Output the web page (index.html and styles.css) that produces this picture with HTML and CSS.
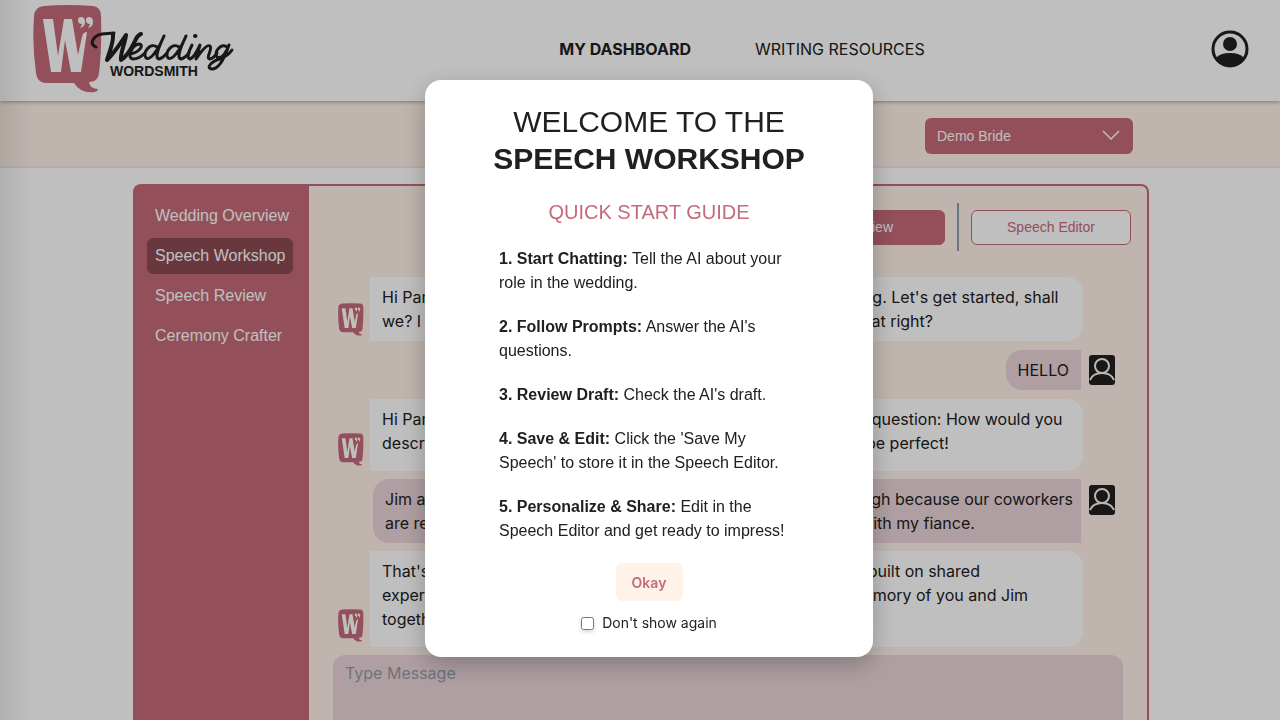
FILE: index.html
```
<!DOCTYPE html>
<html lang="en">
<head>
<meta charset="utf-8">
<title>Wedding Wordsmith</title>
<link rel="stylesheet" href="styles.css">
</head>
<body>
<svg class="defs" aria-hidden="true">
  <symbol id="mark" viewBox="0 0 70 88">
    <path fill="#c56b79" d="M11 1Q34-1 60 1Q68 2 68 11Q69 44 66 68Q65 77 56 77Q57 84 65 84Q65 86 62 87Q48 89 41 78L12 78Q4 77 3 68Q-1 40 1 12Q1 2 11 1Z"/>
    <path fill="#fff" d="M10 14H20L25 51L31 14H39L45 50L49 32Q50 27 54 27L48 67H38L32 35L28 67H18Z"/>
    <path fill="#fff" d="M48 12q4 0 4 5q0 5-5 6q2-3 2-4q-4 0-4-4q0-3 3-3zM56 12q4 0 4 5q0 5-5 6q2-3 2-4q-4 0-4-4q0-3 3-3z"/>
  </symbol>
  <symbol id="person" viewBox="0 0 26 30">
    <rect width="26" height="30" rx="3" fill="#202020"/>
    <circle cx="13" cy="11" r="7" fill="none" stroke="#fff1e9" stroke-width="2"/>
    <path d="M1 25Q4 18 13 18T25 25" fill="none" stroke="#fff1e9" stroke-width="2"/>
  </symbol>
</svg>
<header class="header">
  <a class="logo" href="#" aria-label="Wedding Wordsmith">
    <svg width="204" height="90" viewBox="0 0 204 90">
      <use href="#mark" x="0" y="1" width="70" height="88"/>
      <g fill="none" stroke="#202020" stroke-linecap="round" stroke-linejoin="round" stroke-width="3">
        <path d="M63 43C56 41 59 32 69 30L81 29"/>
        <path stroke-width="4" d="M80 30C81 38 76 49 74 56C82 48 89 37 93 31C92 40 87 49 88 56C95 52 100 41 103 35Q105 31 108 30"/>
        <path d="M97 50C108 48 111 40 106 40C99 41 93 54 100 55Q106 55 112 49"/>
        <path d="M124 43C118 38 109 48 113 54C118 57 126 44 131 32C126 43 121 54 126 55Q130 54 134 49"/>
        <path d="M146 43C140 38 131 48 135 54C140 57 148 44 153 32C148 43 143 54 148 55Q152 54 156 49"/>
        <path d="M159 41C156 47 153 54 157 55Q161 54 167 41L163 55C169 46 174 40 177 42C180 45 172 54 177 55Q181 54 184 49"/>
        <path d="M194 43C189 38 180 48 184 53C189 56 194 47 196 41C192 53 186 65 179 65C172 64 179 57 187 55Q195 52 199 46"/>
        <path stroke-width="4" d="M162 32h.5"/>
      </g>
      <text class="logo-word" x="77" y="72">WORDSMITH</text>
    </svg>
  </a>
  <nav class="nav">
    <a class="current" href="#">MY DASHBOARD</a>
    <a href="#">WRITING RESOURCES</a>
  </nav>
  <button class="account" aria-label="Account">
    <svg width="38" height="38" viewBox="0 0 38 38"><circle cx="19" cy="19" r="17" fill="none" stroke="#202020" stroke-width="3"/><circle cx="19" cy="14" r="7" fill="#202020"/><path d="M5 28Q9 23 19 23T33 28Q27 36 19 36T5 28Z" fill="#202020"/></svg>
  </button>
</header>
<div class="band">
  <div class="band-inner">
    <select class="picker" aria-label="Event"><option>Demo Bride</option></select>
    <svg class="chevron" width="18" height="10" viewBox="0 0 18 10"><path d="M1 1L9 9L17 1" fill="none" stroke="#fff" stroke-width="1.5"/></svg>
  </div>
</div>
<div class="page">
<main class="workspace">
  <aside class="sidebar">
    <a href="#">Wedding Overview</a>
    <a class="active" href="#">Speech Workshop</a>
    <a href="#">Speech Review</a>
    <a href="#">Ceremony Crafter</a>
  </aside>
  <section class="chat">
    <div class="tabs">
      <button class="tab tab-on">Interview</button>
      <span class="divider"></span>
      <button class="tab">Speech Editor</button>
    </div>
    <div class="messages">
      <div class="row bot"><svg class="bot-icon"><use href="#mark"/></svg>
        <p class="bubble">Hi Pam! I'm here to help you write a lovely speech for the wedding. Let's get started, shall<br>we? I understand that you're giving a speech for the couple, is that right?</p></div>
      <div class="row user"><p class="bubble">HELLO</p><svg class="user-icon"><use href="#person"/></svg></div>
      <div class="row bot"><svg class="bot-icon"><use href="#mark"/></svg>
        <p class="bubble tall">Hi Pam! It is wonderful to meet you. Let's start with the very first question: How would you<br>describe your relationship? Just a few short lines or a list would be perfect!</p></div>
      <div class="row user"><p class="bubble wide">Jim and I met at work and soon became close friends, it was tough because our coworkers<br>are really close, and now I am happy to be planning a wedding with my fiance.</p><svg class="user-icon"><use href="#person"/></svg></div>
      <div class="row bot"><svg class="bot-icon"><use href="#mark"/></svg>
        <p class="bubble tall">That's such a lovely story, and a wonderful, healthy relationship built on shared<br>experiences. Could you please tell me more about a favourite memory of you and Jim<br>together?</p></div>
    </div>
    <textarea class="composer" aria-label="Message" placeholder="Type Message"></textarea>
  </section>
</main>
</div>
<div class="overlay">
  <div class="modal" role="dialog" aria-modal="true" aria-labelledby="welcome">
    <h1 id="welcome">WELCOME TO THE<br><strong>SPEECH WORKSHOP</strong></h1>
    <h2>QUICK START GUIDE</h2>
    <div class="steps">
      <p><strong>1. Start Chatting:</strong> Tell the AI about your role in the wedding.</p>
      <p><strong>2. Follow Prompts:</strong> Answer the AI's questions.</p>
      <p><strong>3. Review Draft:</strong> Check the AI's draft.</p>
      <p><strong>4. Save &amp; Edit:</strong> Click the 'Save My Speech' to store it in the Speech Editor.</p>
      <p><strong>5. Personalize &amp; Share:</strong> Edit in the Speech Editor and get ready to impress!</p>
    </div>
    <button class="okay">Okay</button>
    <label class="again"><input type="checkbox"> Don't show again</label>
  </div>
</div>
</body>
</html>
```
FILE: styles.css
```
* { box-sizing: border-box; }
body { margin: 0; height: 100vh; overflow: hidden; display: flex; flex-direction: column; background: #fff; color: #202020; font: 16px/24px Inter, sans-serif; }
a { color: inherit; text-decoration: none; }
button, select, textarea { font: inherit; }
p, h1, h2 { margin: 0; }
.defs { position: absolute; width: 0; height: 0; }
.header { position: relative; flex: none; height: 101px; padding: 0 31px 4px 33px; display: flex; justify-content: space-between; align-items: center; box-shadow: 0 1px 4px rgba(0,0,0,.35); }
.logo { display: flex; width: 240px; }
.logo-word { font: bold 14px "Liberation Sans", sans-serif; fill: #202020; }
.nav { display: flex; gap: 64px; }
.current { font-weight: 700; }
.account { display: flex; padding: 0; border: 0; background: none; }
.band { flex: none; height: 67px; padding-left: 2px; background: #fff1e9; border-bottom: 2px solid #f5e5dc; display: flex; justify-content: center; }
.band-inner { position: relative; width: 100%; max-width: 1016px; padding: 17px 16px 0; display: flex; justify-content: flex-end; }
.picker { appearance: none; width: 208px; height: 36px; border: 0; border-radius: 6px; padding: 0 12px; background: #c56b79; color: #fff; font: 14px "Liberation Sans", sans-serif; }
.chevron { position: absolute; right: 29px; top: 29px; pointer-events: none; }
.page { flex: 1; min-height: 0; padding: 16px 0 0 2px; display: flex; justify-content: center; }
.workspace { width: 100%; max-width: 1016px; border: 2px solid #c56b79; border-bottom: 0; border-radius: 8px 8px 0 0; display: flex; background: #fff1e9; }
.sidebar { width: 174px; flex: none; background: #c56b79; color: #fff; padding: 12px; display: flex; flex-direction: column; align-items: flex-start; gap: 4px; font-family: "Liberation Sans", sans-serif; }
.sidebar a { padding: 6px 8px; border-radius: 6px; }
.sidebar .active { background: #8c4b55; }
.chat { flex: 1; min-width: 0; padding: 17px 24px 0; display: flex; flex-direction: column; }
.tabs { display: flex; justify-content: flex-end; align-items: center; gap: 12px; margin-right: -8px; margin-bottom: 26px; }
.tab { width: 160px; height: 35px; border: 1px solid #c56b79; border-radius: 6px; background: #fff; color: #c56b79; font: 14px "Liberation Sans", sans-serif; }
.tab-on { background: #c56b79; color: #fff; }
.divider { width: 2px; height: 48px; background: #8e9db5; }
.messages { display: flex; flex-direction: column; gap: 8px; margin-bottom: 8px; }
.row { display: flex; gap: 6px; min-height: 42px; padding: 0 8px 0 5px; }
.bot { align-items: flex-end; padding-right: 40px; }
.user { justify-content: flex-end; align-items: center; gap: 8px; padding-left: 40px; }
.bubble { padding: 8px 12px; white-space: nowrap; }
.bot .bubble { flex: 1; min-width: 0; background: #fff; border-radius: 0 16px 16px 0; }
.user .bubble { background: #ebd5d9; border-radius: 16px 0 0 16px; }
.user .wide { flex: 1; min-width: 0; }
.bot .tall { padding-bottom: 16px; }
.bot-icon { width: 26px; height: 33px; margin-bottom: 5px; flex: none; }
.user-icon { width: 26px; height: 30px; margin-top: 6px; flex: none; align-self: flex-start; }
.composer { flex: 1; min-height: 48px; border: 0; border-radius: 12px 12px 0 0; padding: 6px 12px; background: #ebd5d9; resize: none; }
.composer::placeholder { color: #929aa6; opacity: 1; }
.overlay { position: fixed; inset: 0; display: flex; justify-content: center; align-items: flex-start; padding: 80px 0 0 18px; background: linear-gradient(90deg, rgba(0,0,0,.08), transparent 32px), rgba(0,0,0,.25); }
.modal { width: 448px; padding: 23px 32px 24px; background: #fff; border-radius: 16px; box-shadow: 0 8px 24px rgba(0,0,0,.25); display: flex; flex-direction: column; align-items: center; font-family: "Liberation Sans", sans-serif; }
h1 { font-size: 30px; line-height: 37px; font-weight: 400; text-align: center; }
h2 { font-size: 20px; line-height: 28px; font-weight: 400; color: #c56b79; margin: 21px 0; }
.steps { width: 300px; display: flex; flex-direction: column; gap: 20px; }
.okay { margin-top: 20px; width: 67px; height: 38px; border: 0; border-radius: 6px; background: #fff2e9; color: #c56b79; font: 600 14px Inter, sans-serif; }
.again { display: flex; align-items: center; gap: 8px; margin-top: 12px; font: 14px/20px Inter, sans-serif; }
.again input { margin: 0; width: 13px; height: 13px; border-radius: 3px; box-shadow: 0 2px 4px rgba(0,0,0,.15); }
```
